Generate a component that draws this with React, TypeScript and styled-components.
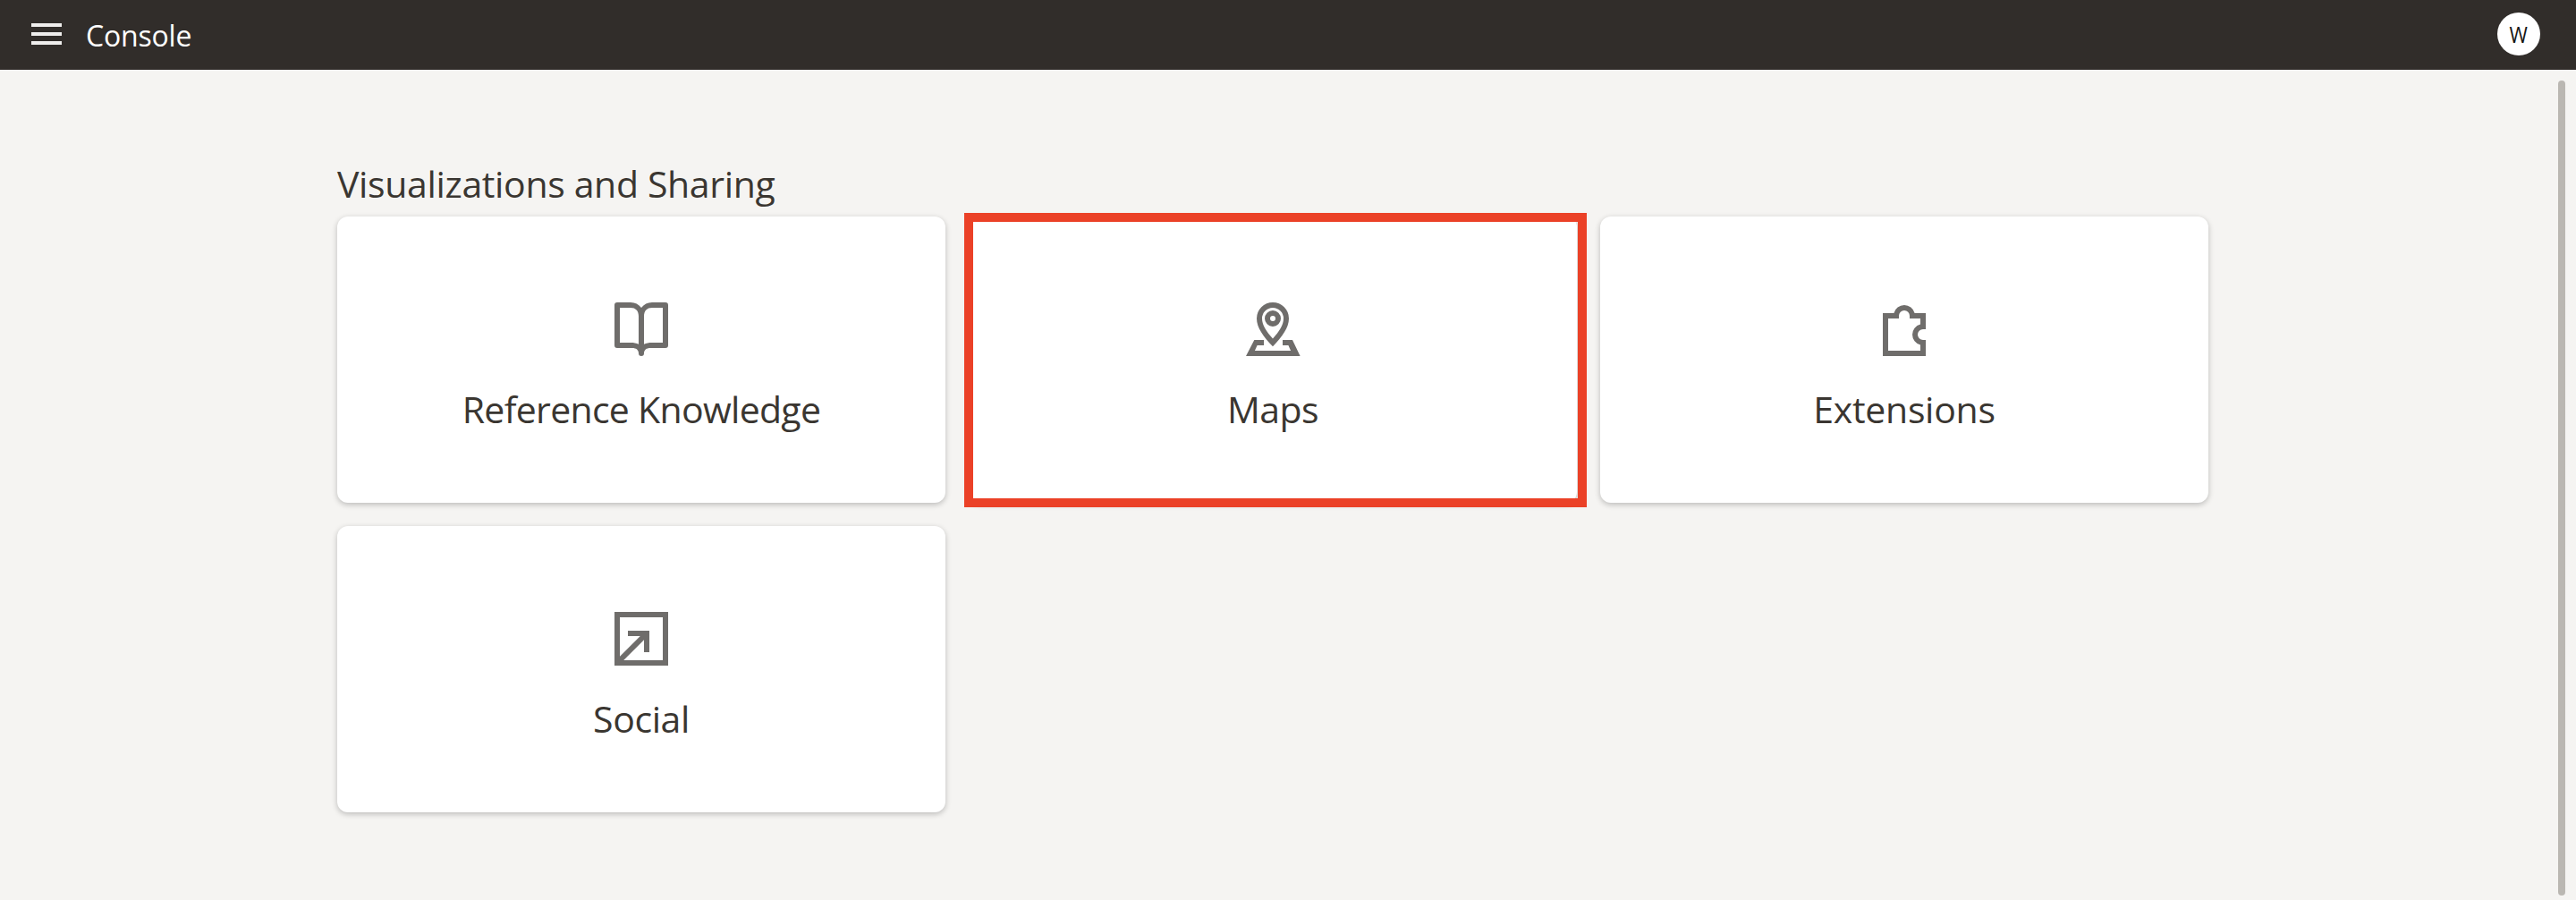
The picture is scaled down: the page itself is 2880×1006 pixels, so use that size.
import React from "react";
import styled, { createGlobalStyle } from "styled-components";

const GlobalStyle = createGlobalStyle`
  *, *::before, *::after { box-sizing: border-box; }
  html, body { margin: 0; padding: 0; }
  body {
    background: #f5f4f2;
    color: #3a3631;
    font-family: "Open Sans", "Noto Sans", sans-serif;
    overflow: hidden;
  }
`;

const Page = styled.div`
  display: flex;
  flex-direction: column;
  height: 1006px;
`;

const Header = styled.header`
  display: flex;
  align-items: center;
  flex: none;
  height: 78px;
  padding: 0 40px 2px 35px;
  background: #312d2a;
  color: #fff;
`;

const MenuButton = styled.button`
  display: flex;
  flex-direction: column;
  gap: 6px;
  width: 34px;
  padding: 0;
  border: 0;
  background: none;
`;

const MenuBar = styled.span`
  height: 4px;
  background: #efeeed;
`;

const AppTitle = styled.h1`
  margin: 0 auto 0 27px;
  padding-top: 3px;
  font-size: 32px;
  font-weight: 400;
  line-height: 44px;
  letter-spacing: -0.2px;
`;

const Avatar = styled.div`
  display: flex;
  align-items: center;
  justify-content: center;
  width: 48px;
  height: 48px;
  border-radius: 50%;
  background: #fff;
  color: #161513;
  font-size: 25px;
  line-height: 24px;
`;

const Initial = styled.span`
  transform: scaleX(0.88);
`;

const Body = styled.div`
  display: flex;
  flex: 1;
  justify-content: space-between;
  padding: 12px 12px 5px 377px;
`;

const Section = styled.main`
  width: 2092px;
  padding-top: 87px;
`;

const SectionTitle = styled.h2`
  margin: 0;
  height: 65px;
  font-size: 41px;
  font-weight: 400;
  line-height: 56px;
  letter-spacing: -0.35px;
  white-space: nowrap;
`;

const Grid = styled.div`
  display: grid;
  grid-template-columns: repeat(3, 1fr);
  grid-auto-rows: 320px;
  gap: 26px;
`;

const Card = styled.a`
  position: relative;
  display: flex;
  flex-direction: column;
  align-items: center;
  padding-top: 90px;
  border-radius: 12px;
  background: #fff;
  box-shadow: 0 2px 6px rgba(0, 0, 0, 0.24);
`;

const Highlight = styled.span`
  position: absolute;
  inset: -4px -11px -5px -5px;
  border: 10px solid #eb4127;
`;

const CardIcon = styled.svg`
  width: 72px;
  height: 72px;
  fill: #6f6d6b;
`;

const CardLabel = styled.span<{ $spacing: number }>`
  margin-top: 25px;
  font-size: 41px;
  line-height: 56px;
  letter-spacing: ${(p) => p.$spacing}px;
  white-space: nowrap;
`;

const ScrollThumb = styled.div`
  width: 8px;
  border-radius: 4px;
  background: #bab7b2;
`;

const BookIcon = () => (
  <path
    fillRule="evenodd"
    d="M3 2h5c1.7 0 3 .7 4 2 1-1.3 2.3-2 4-2h5a1 1 0 0 1 1 1v15a1 1 0 0 1-1 1h-5.6c-1.500 0-2.400.7-2.400 2a1 1 0 0 1-2 0c0-1.300-.9-2-2.400-2H3a1 1 0 0 1-1-1V3a1 1 0 0 1 1-1zM4 4v13h4c1.200 0 2.200.2 3 .6V7.200C11 5.100 9.900 4 8 4zM20 4h-4c-1.900 0-3 1.100-3 3.200v10.400c.8-.4 1.800-.6 3-.6h4z"
  />
);

const MapIcon = () => (
  <path
    fillRule="evenodd"
    d="M12 2a6 6 0 0 1 6 6c0 3.400-2.500 6.800-6 10.400C8.500 14.800 6 11.400 6 8a6 6 0 0 1 6-6zM12 4a4 4 0 0 0-4 4c0 2.400 1.600 4.900 4 7.500 2.400-2.600 4-5.100 4-7.500a4 4 0 0 0-4-4zM12 5a3 3 0 1 1 0 6 3 3 0 0 1 0-6zM12 7a1 1 0 1 0 0 2 1 1 0 0 0 0-2zM5.100 16h3.570v2H6.200l-.9 2h13.400l-.9-2h-2.130v-2h3.660L22.200 22H2z"
  />
);

const PuzzleIcon = () => (
  <path
    fillRule="evenodd"
    d="M4 6h4.130a4 4 0 0 1 7.740 0H20v6h-1a2 2 0 0 0 0 4h1v6H4zM6 8v12h12v-2.130a4 4 0 0 1 0-7.740V8h-4V7a2 2 0 0 0-4 0v1z"
  />
);

const ShareIcon = () => (
  <path
    fillRule="evenodd"
    d="M2 2h20v20H2zM4 4v14.600L11.600 11H7V9h8v8h-2v-4.600L5.400 20H20V4z"
  />
);

interface CardItem {
  label: string;
  icon: React.FC;
  spacing: number;
  highlighted?: boolean;
}

const cards: CardItem[] = [
  { label: "Reference Knowledge", icon: BookIcon, spacing: -0.7 },
  { label: "Maps", icon: MapIcon, spacing: -0.6, highlighted: true },
  { label: "Extensions", icon: PuzzleIcon, spacing: -0.3 },
  { label: "Social", icon: ShareIcon, spacing: -0.4 },
];

export default function App() {
  return (
    <>
      <GlobalStyle />
      <Page>
        <Header>
          <MenuButton aria-label="Menu">
            <MenuBar />
            <MenuBar />
            <MenuBar />
          </MenuButton>
          <AppTitle>Console</AppTitle>
          <Avatar>
            <Initial>W</Initial>
          </Avatar>
        </Header>
        <Body>
          <Section>
            <SectionTitle>Visualizations and Sharing</SectionTitle>
            <Grid>
              {cards.map(({ label, icon: Icon, spacing, highlighted }) => (
                <Card key={label}>
                  <CardIcon viewBox="0 0 24 24">
                    <Icon />
                  </CardIcon>
                  <CardLabel $spacing={spacing}>{label}</CardLabel>
                  {highlighted && <Highlight />}
                </Card>
              ))}
            </Grid>
          </Section>
          <ScrollThumb />
        </Body>
      </Page>
    </>
  );
}
